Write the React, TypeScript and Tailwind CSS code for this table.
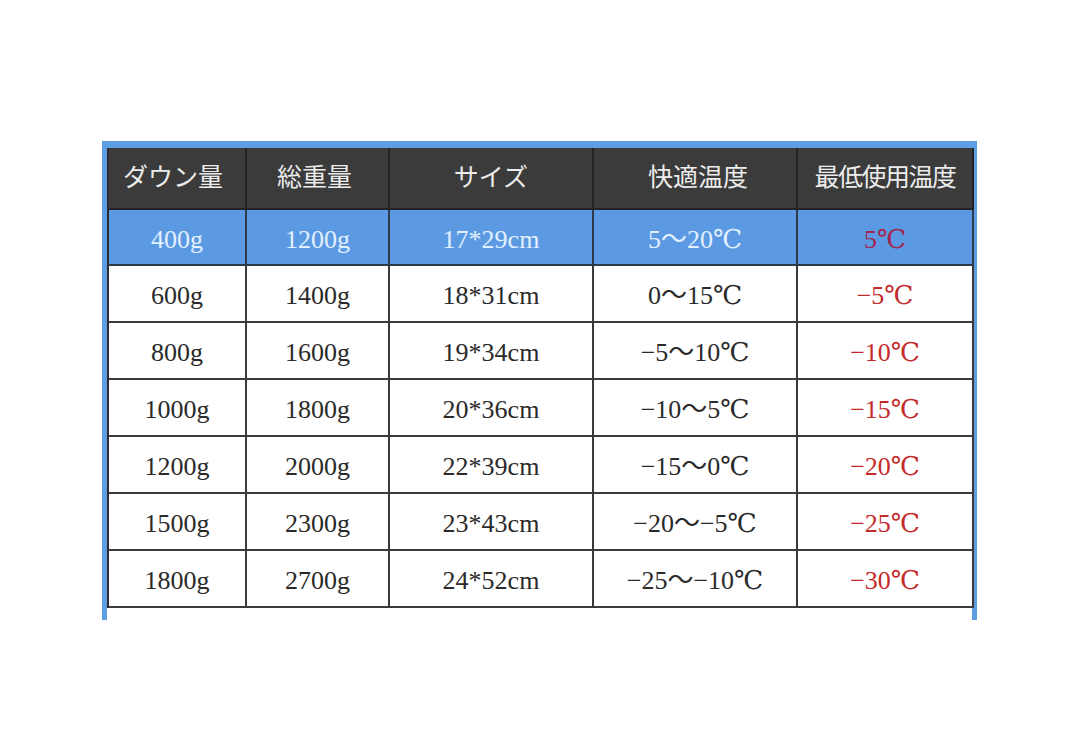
import React from "react";

const rows = [
  ["600g", "1400g", "18*31cm", "0～15℃", "−5℃"],
  ["800g", "1600g", "19*34cm", "−5～10℃", "−10℃"],
  ["1000g", "1800g", "20*36cm", "−10～5℃", "−15℃"],
  ["1200g", "2000g", "22*39cm", "−15～0℃", "−20℃"],
  ["1500g", "2300g", "23*43cm", "−20～−5℃", "−25℃"],
  ["1800g", "2700g", "24*52cm", "−25～−10℃", "−30℃"],
];

const headers = ["ダウン量", "総重量", "サイズ", "快適温度", "最低使用温度"];
const first = ["400g", "1200g", "17*29cm", "5～20℃", "5℃"];

const font = {
  fontFamily: '"Liberation Serif", "DejaVu Serif", "Noto Sans CJK JP", serif',
};

export default function App() {
  return (
    <div className="w-[1080px] h-[756px] bg-white pt-[141px] pl-[102px]" style={font}>
      <div className="w-[875px] border-t-[7px] border-x-[5px] border-[#5d9de3] bg-white pb-[12px]">
        <div className="grid grid-cols-[138px_143px_204px_204px_176px] border-l-2 border-[#2b2b2b]">
          {headers.map((h, i) => (
            <div
              key={h}
              className={`h-[62px] flex items-center ${i === 0 ? "justify-start pl-[14px]" : "justify-center"} bg-[#3b3b3b] text-[#ececec] text-[25px] border-r-2 border-b-2 border-[#222]`}
            >
              <span className={i === 4 ? "tracking-[-1.5px]" : i === 1 ? "pr-[6px]" : i === 3 ? "pl-[6px]" : ""}>{h}</span>
            </div>
          ))}
          {first.map((c, i) => (
            <div
              key={"f" + i}
              className={`h-[56px] flex items-center justify-center pt-[4px] bg-[#5b9ae2] text-[26px] border-r-2 border-b-2 border-[#2d3a4a] ${i === 4 ? "text-[#a3234e]" : "text-[#e2f0ff]"}`}
            >
              {c}
            </div>
          ))}
          {rows.map((r, ri) =>
            r.map((c, i) => (
              <div
                key={ri + "-" + i}
                className={`h-[57px] flex items-center justify-center pt-[4px] bg-white text-[26px] border-r-2 border-b-2 border-[#3a3a3a] ${i === 4 ? "text-[#c42a2a]" : "text-[#2a2a2a]"}`}
              >
                {c}
              </div>
            ))
          )}
        </div>
      </div>
    </div>
  );
}
